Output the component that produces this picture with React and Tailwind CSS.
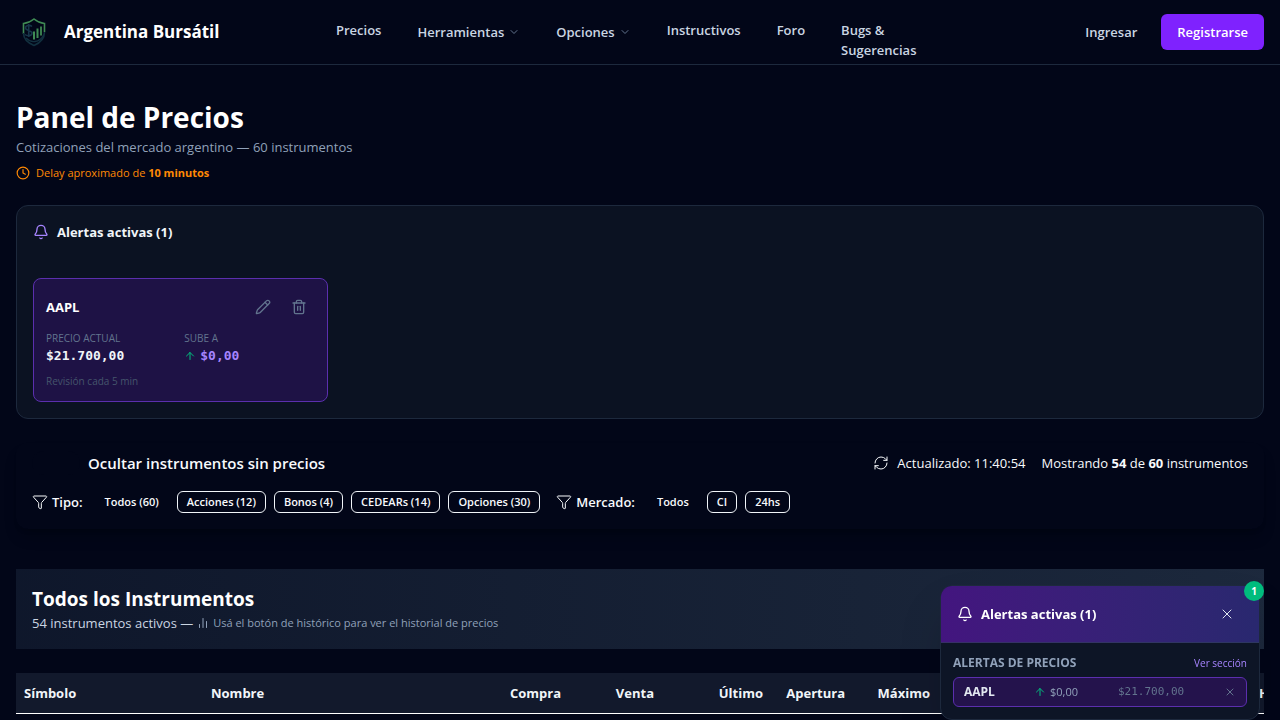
import {
  ArrowUp,
  Bell,
  ChartNoAxesColumn,
  ChevronDown,
  Clock,
  Funnel,
  Pencil,
  RefreshCw,
  Trash2,
  X,
} from 'lucide-react';

const tipos = ['Acciones (12)', 'Bonos (4)', 'CEDEARs (14)', 'Opciones (30)'];
const mercados = ['CI', '24hs'];

const columnas = [
  { label: 'Símbolo', className: 'w-[187px] text-left' },
  { label: 'Nombre', className: 'w-[270px] text-left' },
  { label: 'Compra', className: 'w-[96px] text-right' },
  { label: 'Venta', className: 'w-[93px] text-right' },
  { label: 'Último', className: 'w-[109px] text-right' },
  { label: 'Apertura', className: 'w-[82px] text-right' },
  { label: 'Máximo', className: 'w-[85px] text-right' },
  { label: '', className: 'w-[313px]' },
  { label: 'Histórico', className: 'w-[100px] text-left' },
];

function Logo() {
  return (
    <svg viewBox="0 0 36 36" className="size-9" fill="none" aria-hidden="true">
      <path d="M7.5 20V9.5C12 9 15 7.5 18 5c3 2.5 6 4 10.5 4.5V18" stroke="#3f8a54" strokeWidth="1.6" />
      <path d="M7.5 19c0 6 4.5 10 10.5 12.5C24 29 28.5 25 28.5 18" stroke="#12303f" strokeWidth="1.6" />
      <path d="M10 24c3 3 6 4 9 3.5 4-.5 7-3 9-7" stroke="#12303f" strokeWidth="1.4" />
      <path d="M16 12.5c-2-1.8-6.500-1.300-6.500 1.500s6.500 2 6.500 5-4.500 3.500-7 1.500M12.700 10v13" stroke="#17364a" strokeWidth="1.6" />
      <path d="M18 25.5v-8M21.5 24V14.5" stroke="#3f8a54" strokeWidth="2" />
      <path d="M25 21.5v-9" stroke="#3f8a54" strokeWidth="1.8" />
    </svg>
  );
}

function Header() {
  return (
    <header className="flex h-[65px] items-center border-b border-slate-800 px-4">
      <a href="#" className="flex w-[320px] shrink-0 items-center gap-3 text-[17px] leading-7 font-bold text-white">
        <Logo />
        Argentina Bursátil
      </a>
      <nav className="flex h-full flex-1 items-start gap-9 pt-5 text-[13px] leading-5 font-semibold text-slate-300">
        <a href="#">Precios</a>
        <button className="mt-[2px] flex items-center gap-1">
          Herramientas <ChevronDown className="size-3 text-slate-500" />
        </button>
        <button className="mt-[2px] flex items-center gap-1">
          Opciones <ChevronDown className="size-3 text-slate-500" />
        </button>
        <a href="#">Instructivos</a>
        <a href="#">Foro</a>
        <a href="#" className="w-20">Bugs &amp; Sugerencias</a>
      </nav>
      <div className="flex items-center gap-6 text-[13px] leading-5 font-semibold">
        <a href="#" className="text-slate-300">Ingresar</a>
        <button className="rounded-md bg-[#7f22fe] px-4 py-2 text-white">Registrarse</button>
      </div>
    </header>
  );
}

function AlertCard() {
  return (
    <article className="rounded-lg border border-[#5b2fae] bg-[#1e1245] p-3">
      <div className="flex items-center justify-between">
        <h3 className="text-[13px] leading-5 font-bold text-white">AAPL</h3>
        <div className="flex gap-1 text-slate-500">
          <button className="p-2" aria-label="Editar alerta"><Pencil className="size-4" /></button>
          <button className="p-2" aria-label="Eliminar alerta"><Trash2 className="size-4" /></button>
        </div>
      </div>
      <div className="mt-2 grid grid-cols-2 gap-2 font-['DejaVu_Sans_Mono',monospace] text-[13px] leading-5 font-bold">
        <div>
          <p className="font-['Open_Sans',sans-serif] text-[10px] leading-[15px] font-normal text-slate-500">PRECIO ACTUAL</p>
          <p className="text-slate-100">$21.700,00</p>
        </div>
        <div>
          <p className="font-['Open_Sans',sans-serif] text-[10px] leading-[15px] font-normal text-slate-500">SUBE A</p>
          <p className="flex items-center gap-1 text-[#a684ff]">
            <ArrowUp className="size-3 text-emerald-500" />
            $0,00
          </p>
        </div>
      </div>
      <p className="mt-2 text-[10px] leading-[15px] text-slate-600">Revisión cada 5 min</p>
    </article>
  );
}

function FilterGroup({ label, all, options }) {
  return (
    <div className="flex items-center gap-2 text-[11px] leading-4 font-semibold">
      <span className="mr-1 flex items-center gap-1 text-[13px] leading-5">
        <Funnel className="size-4" strokeWidth={1.5} />
        {label}
      </span>
      <button className="rounded-md border border-transparent px-[9px] py-[2px]">{all}</button>
      {options.map((o) => (
        <button key={o} className="rounded-md border border-slate-100 px-[9px] py-[2px]">{o}</button>
      ))}
    </div>
  );
}

function Filters() {
  return (
    <section className="mt-6 rounded-xl px-4 pt-2 pb-4 text-slate-50 shadow-lg shadow-black/20">
      <div className="flex items-center justify-between">
        <label className="flex items-center gap-2 text-[15px] leading-6 font-semibold">
          <input type="checkbox" defaultChecked className="h-6 w-12 appearance-none rounded-full bg-[#020618]" />
          Ocultar instrumentos sin precios
        </label>
        <div className="flex items-center gap-4 text-[13px] leading-5">
          <span className="flex items-center gap-2">
            <RefreshCw className="size-4" strokeWidth={1.5} />
            Actualizado: 11:40:54
          </span>
          <span>Mostrando <b>54</b> de <b>60</b> instrumentos</span>
        </div>
      </div>
      <div className="mt-4 flex items-center gap-4">
        <FilterGroup label="Tipo:" all="Todos (60)" options={tipos} />
        <FilterGroup label="Mercado:" all="Todos" options={mercados} />
      </div>
    </section>
  );
}

function AlertPanel() {
  return (
    <aside className="fixed right-5 bottom-0 w-80">
      <div className="overflow-hidden rounded-xl border border-slate-800 bg-[#0d1526] shadow-2xl">
        <div className="flex h-[57px] items-center gap-2 border-b border-slate-700/60 bg-linear-to-r from-[#43157f] to-[#29286f] px-4 text-white">
          <Bell className="size-4" />
          <h2 className="flex-1 text-[13px] leading-5 font-bold">Alertas activas (1)</h2>
          <button className="p-2 text-slate-200" aria-label="Cerrar"><X className="size-4" strokeWidth={1.5} /></button>
        </div>
        <div className="p-3">
          <div className="flex items-center justify-between leading-4">
            <h3 className="text-[12px] font-bold text-slate-400">ALERTAS DE PRECIOS</h3>
            <a href="#" className="text-[10px] text-[#a684ff]">Ver sección</a>
          </div>
          <div className="mt-[6px] flex h-[30px] items-center rounded-md border border-[#5b2fae] bg-[#24134c] px-[10px] text-[11px] leading-4">
            <b className="w-[70px] text-[12px] text-slate-200">AAPL</b>
            <span className="flex w-[84px] items-center gap-1 text-slate-400">
              <ArrowUp className="size-3 text-emerald-500" />
              $0,00
            </span>
            <span className="flex-1 font-['DejaVu_Sans_Mono',monospace] text-slate-500">$21.700,00</span>
            <button aria-label="Quitar alerta" className="text-slate-500"><X className="size-3" /></button>
          </div>
        </div>
      </div>
      <span className="absolute -top-1 -right-1 flex size-5 items-center justify-center rounded-full bg-[#00bc7d] text-[10px] leading-4 font-bold text-white">1</span>
    </aside>
  );
}

export default function App() {
  return (
    <div className="h-screen overflow-hidden bg-[#020618] font-['Open_Sans',sans-serif]">
      <Header />
      <main className="px-4 pt-8">
        <h1 className="text-[28px] leading-10 font-bold text-white">Panel de Precios</h1>
        <p className="text-[13px] leading-5 text-slate-400">Cotizaciones del mercado argentino — 60 instrumentos</p>
        <p className="mt-2 flex items-center gap-[6px] text-[11px] leading-4 font-medium text-[#ff8904]">
          <Clock className="size-[14px]" />
          <span>Delay aproximado de <b>10 minutos</b></span>
        </p>

        <section className="mt-6 rounded-xl border border-slate-800 bg-[#0b1222] p-4">
          <h2 className="flex items-center gap-2 text-[13px] leading-5 font-bold text-slate-100">
            <Bell className="size-4 text-[#a684ff]" />
            Alertas activas (1)
          </h2>
          <div className="mt-9 grid grid-cols-4 gap-3">
            <AlertCard />
          </div>
        </section>

        <Filters />

        <section className="mt-10">
          <div className="bg-linear-to-r from-slate-900 to-slate-800 p-4">
            <h2 className="text-[19px] leading-7 font-bold text-white">Todos los Instrumentos</h2>
            <p className="flex items-center gap-1 text-[13px] leading-5 text-slate-300">
              54 instrumentos activos —
              <span className="flex items-center gap-1 text-[11px] text-slate-400">
                <ChartNoAxesColumn className="size-3" />
                Usá el botón de histórico para ver el historial de precios
              </span>
            </p>
          </div>
          <div className="mt-6 overflow-hidden">
            <table className="w-[1335px] table-fixed border-collapse">
              <thead>
                <tr className="h-10 border-b border-white bg-[#12192c] text-[13px] leading-5 text-slate-100">
                  {columnas.map((c) => (
                    <th key={c.label} className={`${c.className} px-2 font-bold`}>{c.label}</th>
                  ))}
                </tr>
              </thead>
            </table>
          </div>
        </section>
      </main>
      <AlertPanel />
    </div>
  );
}
